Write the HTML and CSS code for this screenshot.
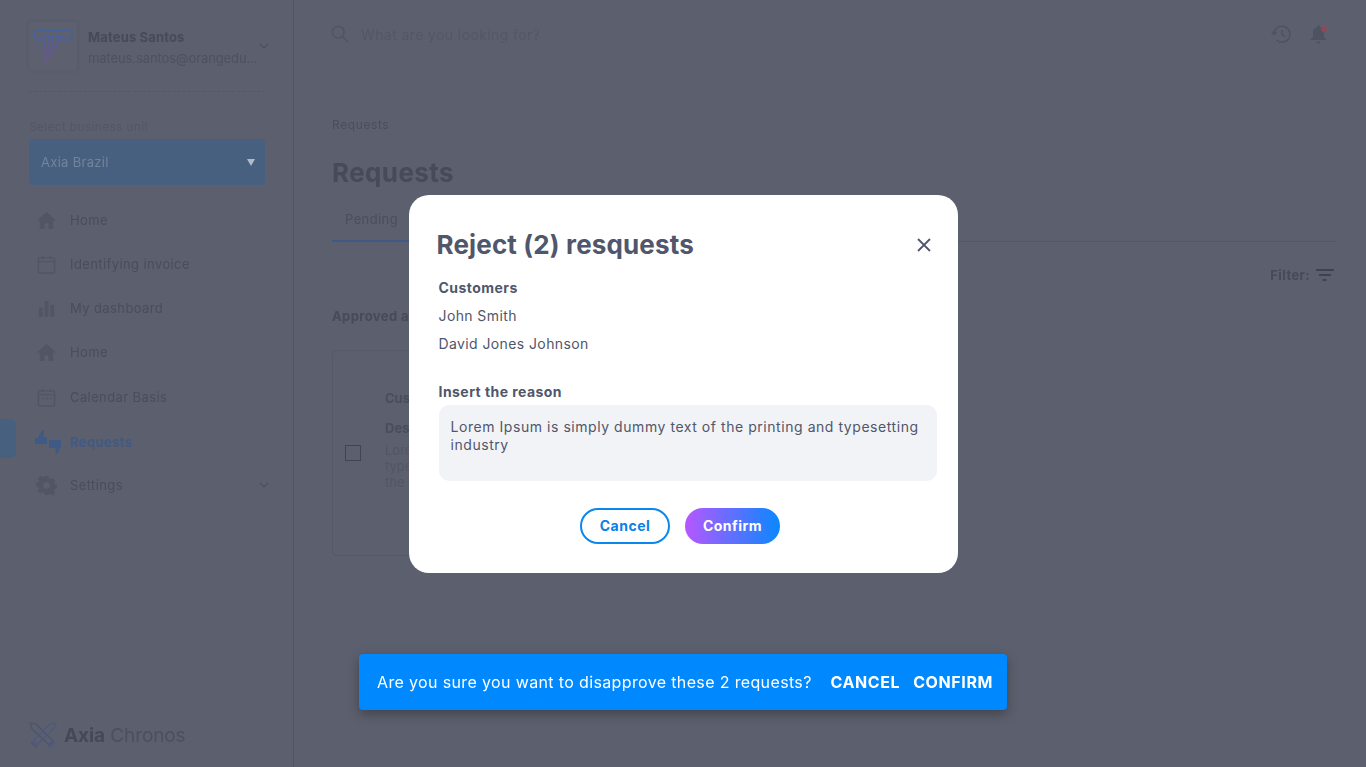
FILE: index.html
```html
<!DOCTYPE html>
<html lang="en">
<head>
    <meta charset="UTF-8">
    <meta name="viewport" content="width=device-width, initial-scale=1.0">
    <title>Requests - Axia Chronos</title>
    <link rel="stylesheet" href="styles.css">
</head>
<body>
    <div class="app">
        <aside class="sidebar">
            <div class="user">
                <div class="user-logo">
                    <svg width="40" height="36" viewBox="0 0 40 36" fill="none" stroke-width="1.800">
                        <defs>
                            <linearGradient id="logoGrad" gradientUnits="userSpaceOnUse" x1="0" y1="2" x2="0" y2="34">
                                <stop offset="0" stop-color="#46629a"/>
                                <stop offset="1" stop-color="#6e5494"/>
                            </linearGradient>
                        </defs>
                        <path d="M9 10a2.500 2.500 0 0 1-3 2a5 5 0 0 1 0-10h28a5 5 0 0 1 0 10a2.500 2.500 0 0 1-3-2" stroke="#46629a"/>
                        <path d="M10 8h20L13 33z" stroke="url(#logoGrad)"/>
                        <path d="M15 8v18M20 8v12M25 8v7" stroke="url(#logoGrad)"/>
                    </svg>
                </div>
                <div class="user-info">
                    <div class="user-name">Mateus Santos</div>
                    <div class="user-mail">mateus.santos@orangedu...</div>
                </div>
                <svg class="chevron" width="10" height="6" viewBox="0 0 10 6" fill="none"><path d="M1 1l4 4 4-4"/></svg>
            </div>

            <div class="unit-label">Select business unit</div>
            <div class="unit-select">
                <span>Axia Brazil</span>
                <span class="unit-arrow"></span>
            </div>

            <nav class="nav">
                <a class="nav-item">
                    <svg class="nav-icon" viewBox="0 0 20 20"><path d="M10 1L0 10h3v9h5v-6h4v6h5v-9h3z"/></svg>
                    Home
                </a>
                <a class="nav-item">
                    <svg class="nav-icon nav-icon--line" viewBox="0 0 20 20"><rect x="1.500" y="3" width="17" height="16" rx="1"/><path d="M1.500 7h17M6 1v3M14 1v3"/></svg>
                    Identifying invoice
                </a>
                <a class="nav-item">
                    <svg class="nav-icon" viewBox="0 0 20 20"><path d="M2 9h4v10H2zM8 2h4v17H8zM14 6h4v13h-4z"/></svg>
                    My dashboard
                </a>
                <a class="nav-item">
                    <svg class="nav-icon" viewBox="0 0 20 20"><path d="M10 1L0 10h3v9h5v-6h4v6h5v-9h3z"/></svg>
                    Home
                </a>
                <a class="nav-item nav-item--shift">
                    <svg class="nav-icon nav-icon--line" viewBox="0 0 20 20"><rect x="1.500" y="3" width="17" height="16" rx="1"/><path d="M1.500 7h17M6 1v3M14 1v3M5 11h2M9 11h2M13 11h2"/></svg>
                    Calendar Basis
                </a>
                <a class="nav-item nav-item--active nav-item--shift">
                    <svg class="nav-icon nav-icon--wide" viewBox="0 0 26 24"><path d="M0 8h3l4-8h2v7h3v7H0zM14 10h12v8h-1.500l-2 6h-2v-6H14z"/></svg>
                    Requests
                </a>
                <a class="nav-item nav-item--back">
                    <svg class="nav-icon" viewBox="0 0 20 20"><path fill-rule="evenodd" d="M8 0h4l.5 2.600 1.800.8 2.200-1.500 2.800 2.800-1.500 2.200.8 1.800 2.400.5v4l-2.400.5-.8 1.800 1.500 2.200-2.800 2.800-2.200-1.500-1.800.8L12 20H8l-.5-2.400-1.800-.8-2.200 1.500-2.800-2.800 1.500-2.200-.8-1.800L-1 11V7l2.400-.5.8-1.800L.7 2.500l2.800-2.800 2.200 1.500 1.800-.8zM10 6.500a3.500 3.500 0 1 0 0 7 3.500 3.500 0 0 0 0-7z"/></svg>
                    Settings
                    <svg class="chevron chevron--end" width="10" height="6" viewBox="0 0 10 6" fill="none"><path d="M1 1l4 4 4-4"/></svg>
                </a>
            </nav>

            <div class="brand">
                <svg width="28" height="27" viewBox="0 0 28 27" fill="none" stroke-width="1.200">
                    <path d="M1 1l6 1 17 17-4 4L3 7zM2 20l6 6" stroke="#4c5272"/>
                    <path d="M27 1l-6 1L4 19l4 4 17-17zM20 26l6-6" stroke="#4a5a80"/>
                </svg>
                <span class="brand-name"><b>Axia</b> Chronos</span>
            </div>
        </aside>

        <div class="main">
            <header class="topbar">
                <div class="search">
                    <svg width="18" height="18" viewBox="0 0 20 20" fill="none" stroke="#505361" stroke-width="1.500"><circle cx="8" cy="8" r="6.500"/><path d="M13 13l6 6"/></svg>
                    <span>What are you looking for?</span>
                </div>
                <div class="top-icons">
                    <svg width="20" height="18" viewBox="0 0 20 18" fill="none" stroke="#4f5260" stroke-width="1.500"><path d="M3 9a8 8 0 1 1 2.500 6M0.500 6.500L3 9.500l3-2.500M11 5v4.500l3 2"/></svg>
                    <div class="bell">
                        <svg width="17" height="19" viewBox="0 0 17 19" fill="#4f5260"><path d="M8.500 0a2 2 0 0 1 1.500 2c3 1 4 3 4 6v4l3 3H0l3-3V8c0-3 1-5 4-6a2 2 0 0 1 1.500-2zM6.500 16.500h4a2 2 0 0 1-4 0z"/></svg>
                        <span class="bell-dot"></span>
                    </div>
                </div>
            </header>

            <div class="content">
                <div class="crumb">Requests</div>
                <h1 class="page-title">Requests</h1>
                <div class="tabs">
                    <div class="tab tab--on">Pending</div>
                </div>
                <div class="filter-row">
                    <span>Filter:</span>
                    <svg width="18" height="13" viewBox="0 0 18 13" fill="#3f4250"><path d="M0 0h18v2H0zM3 5h12v2H3zM6.500 10h4v2h-4z"/></svg>
                </div>
                <div class="section-title">Approved a</div>
                <div class="card">
                    <span class="check"></span>
                    <div class="card-body">
                        <div class="card-label">Cus</div>
                        <div class="card-label card-label--gap">Des</div>
                        <p class="card-text">Lore<br>type<br>the</p>
                    </div>
                </div>
            </div>
        </div>
    </div>

    <div class="layer">
        <div class="modal">
            <div class="modal-head">
                <h2>Reject (2) resquests</h2>
                <svg class="modal-close" width="14" height="14" viewBox="0 0 14 14" fill="none"><path d="M1 1l12 12M13 1L1 13"/></svg>
            </div>
            <div class="field-label">Customers</div>
            <div class="customer">John Smith</div>
            <div class="customer">David Jones Johnson</div>
            <div class="field-label field-label--reason">Insert the reason</div>
            <div class="reason">Lorem Ipsum is simply dummy text of the printing and typesetting industry</div>
            <div class="modal-actions">
                <button class="btn btn--outline">Cancel</button>
                <button class="btn btn--grad">Confirm</button>
            </div>
        </div>

        <div class="snackbar">
            <span class="snack-text">Are you sure you want to disapprove these 2 requests?</span>
            <span class="snack-action snack-action--first">CANCEL</span>
            <span class="snack-action snack-action--last">CONFIRM</span>
        </div>
    </div>
</body>
</html>
```

FILE: styles.css
```css
* {
    box-sizing: border-box;
}
html, body {
    margin: 0;
    height: 100%;
    overflow: hidden;
}
body {
    font-family: 'Inter', 'Liberation Sans', sans-serif;
    background: #5c5f6d;
    color: #474a58;
}
/* the page behind the dialog, already dimmed */
.app {
    display: flex;
    height: 767px;
    filter: blur(.4px);
}
.sidebar {
    width: 294px;
    flex-shrink: 0;
    border-right: 1px solid #535664;
    padding: 22px 28px 0 29px;
    display: flex;
    flex-direction: column;
}
.user {
    display: flex;
    align-items: center;
    height: 70px;
    padding-bottom: 22px;
    border-bottom: 1px dashed #555866;
}
.user-logo {
    width: 48px;
    height: 48px;
    border-radius: 3px;
    display: flex;
    align-items: center;
    justify-content: center;
    background: #5d606e;
    box-shadow: 0 0 4px rgba(60, 60, 80, .12);
    flex-shrink: 0;
}
.user-info {
    margin-left: 11px;
    flex: 1;
    min-width: 0;
    padding-top: 3px;
}
.user-name {
    font-size: 13px;
    font-weight: 700;
    letter-spacing: .15px;
}
.user-mail {
    margin-top: 5px;
    font-size: 13px;
    letter-spacing: -.1px;
    color: #4e515f;
    white-space: nowrap;
}
.chevron {
    margin-right: -4px;
}
.chevron path {
    stroke: #4b4e5c;
    stroke-width: 1.200;
}
.chevron--end {
    margin-left: auto;
}
.unit-label {
    margin-top: 27px;
    font-size: 12px;
    letter-spacing: .3px;
    color: #545766;
}
.unit-select {
    margin-top: 5px;
    height: 46px;
    background: #48607f;
    border-radius: 4px;
    padding: 0 10px 0 12px;
    display: flex;
    align-items: center;
    justify-content: space-between;
    font-size: 13px;
    letter-spacing: .3px;
    color: #73839a;
}
.unit-arrow {
    width: 0;
    height: 0;
    border-left: 4px solid transparent;
    border-right: 4px solid transparent;
    border-top: 7px solid #b0bbca;
}
.nav {
    margin-top: 13px;
}
.nav-item {
    display: flex;
    align-items: center;
    height: 44px;
    font-size: 13px;
    letter-spacing: .4px;
    color: #4a4d5b;
    padding-left: 8px;
    position: relative;
}
.nav-item--shift {
    top: 1px;
}
.nav-item--active {
    color: #3f5a84;
    font-weight: 700;
    top: 2px;
}
.nav-item--back {
    top: 1px;
}
.nav-item--active::before {
    content: "";
    position: absolute;
    left: -29px;
    top: -1px;
    width: 16px;
    height: 39px;
    background: #48607f;
    border-radius: 0 6px 6px 0;
}
.nav-icon {
    width: 19px;
    height: 19px;
    margin-right: 14px;
    fill: #525564;
    overflow: visible;
}
.nav-icon--line {
    fill: none;
    stroke: #525564;
    stroke-width: 1.500;
}
.nav-icon--wide {
    width: 26px;
    height: 24px;
    margin-left: -2px;
    margin-right: 9px;
    fill: #3f5a84;
}
.brand {
    margin-top: auto;
    margin-bottom: 18px;
    display: flex;
    align-items: center;
    gap: 7px;
}
.brand-name {
    font-size: 19px;
    letter-spacing: -.1px;
    color: #4c4f5d;
}
.brand-name b {
    color: #454858;
}
.main {
    flex: 1;
    min-width: 0;
}
.topbar {
    height: 70px;
    display: flex;
    align-items: center;
    justify-content: space-between;
    padding: 0 39px 0 37px;
}
.search {
    display: flex;
    align-items: center;
    gap: 12px;
    width: 425px;
    font-size: 14px;
    letter-spacing: .4px;
    color: #545766;
    margin-top: -2px;
}
.top-icons {
    display: flex;
    align-items: center;
    gap: 19px;
    margin-top: -2px;
}
.bell {
    position: relative;
    height: 19px;
}
.bell-dot {
    position: absolute;
    top: 1px;
    right: 0;
    width: 6px;
    height: 6px;
    border-radius: 50%;
    background: #8a4a5c;
}
.content {
    padding: 47px 30px 0 38px;
}
.crumb {
    font-size: 12px;
    letter-spacing: .6px;
    color: #4b4e5c;
}
.page-title {
    margin: 25px 0 0;
    font-size: 26px;
    font-weight: 700;
    letter-spacing: .4px;
}
.tabs {
    margin-top: 12px;
    display: flex;
    border-bottom: 1px solid #555866;
    height: 42px;
}
.tab {
    padding: 0 13px;
    font-size: 13px;
    letter-spacing: .4px;
    line-height: 38px;
    color: #4b4e5c;
}
.tab--on {
    border-bottom: 2px solid #3f5a84;
    height: 42px;
    width: 77px;
}
.filter-row {
    margin: 25px 2px 0 0;
    display: flex;
    justify-content: flex-end;
    align-items: center;
    gap: 6px;
    font-size: 13px;
    font-weight: 700;
    letter-spacing: .4px;
}
.section-title {
    margin-top: 25px;
    white-space: nowrap;
    font-size: 13px;
    font-weight: 700;
    letter-spacing: .4px;
}
.card {
    margin-top: 26px;
    width: 400px;
    height: 206px;
    border: 1px solid #565967;
    border-radius: 4px;
    display: flex;
    align-items: center;
    padding-left: 12px;
}
.check {
    width: 16px;
    height: 16px;
    border: 1px solid #42454f;
}
.card-body {
    margin: 0 0 26px 24px;
    font-size: 13px;
    line-height: 16px;
}
.card-label {
    font-weight: 700;
    color: #4a4d5b;
}
.card-label--gap {
    margin-top: 14px;
}
.card-text {
    margin: 6px 0 0;
    color: #525563;
}
.layer {
    position: fixed;
    inset: 0;
    display: flex;
    align-items: center;
    justify-content: center;
}
.modal {
    width: 549px;
    height: 378px;
    background: #fff;
    border-radius: 20px;
    padding: 31px 21px 0 28px;
}
.modal-head {
    display: flex;
    justify-content: space-between;
    align-items: center;
}
.modal-head h2 {
    margin: 0;
    font-size: 26px;
    font-weight: 700;
    line-height: 38px;
    letter-spacing: .15px;
    color: #50566b;
}
.modal-close {
    margin-right: 6px;
}
.modal-close path {
    stroke: #50566b;
    stroke-width: 1.800;
}
.field-label {
    margin: 15px 0 0 2px;
    font-size: 14px;
    font-weight: 700;
    line-height: 17px;
    letter-spacing: .45px;
    color: #50566b;
}
.field-label--reason {
    margin-top: 31px;
}
.customer {
    margin: 11px 0 0 2px;
    font-size: 14px;
    line-height: 17px;
    letter-spacing: .4px;
    color: #50566b;
}
.reason {
    margin: 5px 0 0 2px;
    width: 498px;
    height: 76px;
    background: #f2f3f7;
    border-radius: 10px;
    padding: 13px 12px;
    font-size: 14px;
    line-height: 18px;
    letter-spacing: .55px;
    color: #50566b;
}
.modal-actions {
    margin-top: 27px;
    margin-right: 13px;
    display: flex;
    justify-content: center;
    gap: 15px;
}
.btn {
    height: 36px;
    border-radius: 18px;
    font-family: inherit;
    font-size: 14px;
    font-weight: 700;
    letter-spacing: .5px;
    padding: 0;
}
.btn--outline {
    width: 90px;
    background: #fff;
    border: 2px solid #0a88f0;
    color: #0a80e8;
}
.btn--grad {
    width: 95px;
    border: none;
    color: #fff;
    background: linear-gradient(to right, #b657ff, #0a88ff);
}
.snackbar {
    position: absolute;
    left: 359px;
    top: 654px;
    width: 648px;
    height: 56px;
    background: #0088ff;
    border-radius: 4px;
    box-shadow: 0 4px 12px rgba(0, 0, 0, .3);
    display: flex;
    align-items: center;
    padding: 0 14px 0 18px;
    color: #fff;
    font-size: 16px;
}
.snack-text {
    letter-spacing: .36px;
}
.snack-action {
    font-weight: 700;
    letter-spacing: .6px;
}
.snack-action--first {
    margin-left: auto;
}
.snack-action--last {
    margin-left: 13px;
}
```
